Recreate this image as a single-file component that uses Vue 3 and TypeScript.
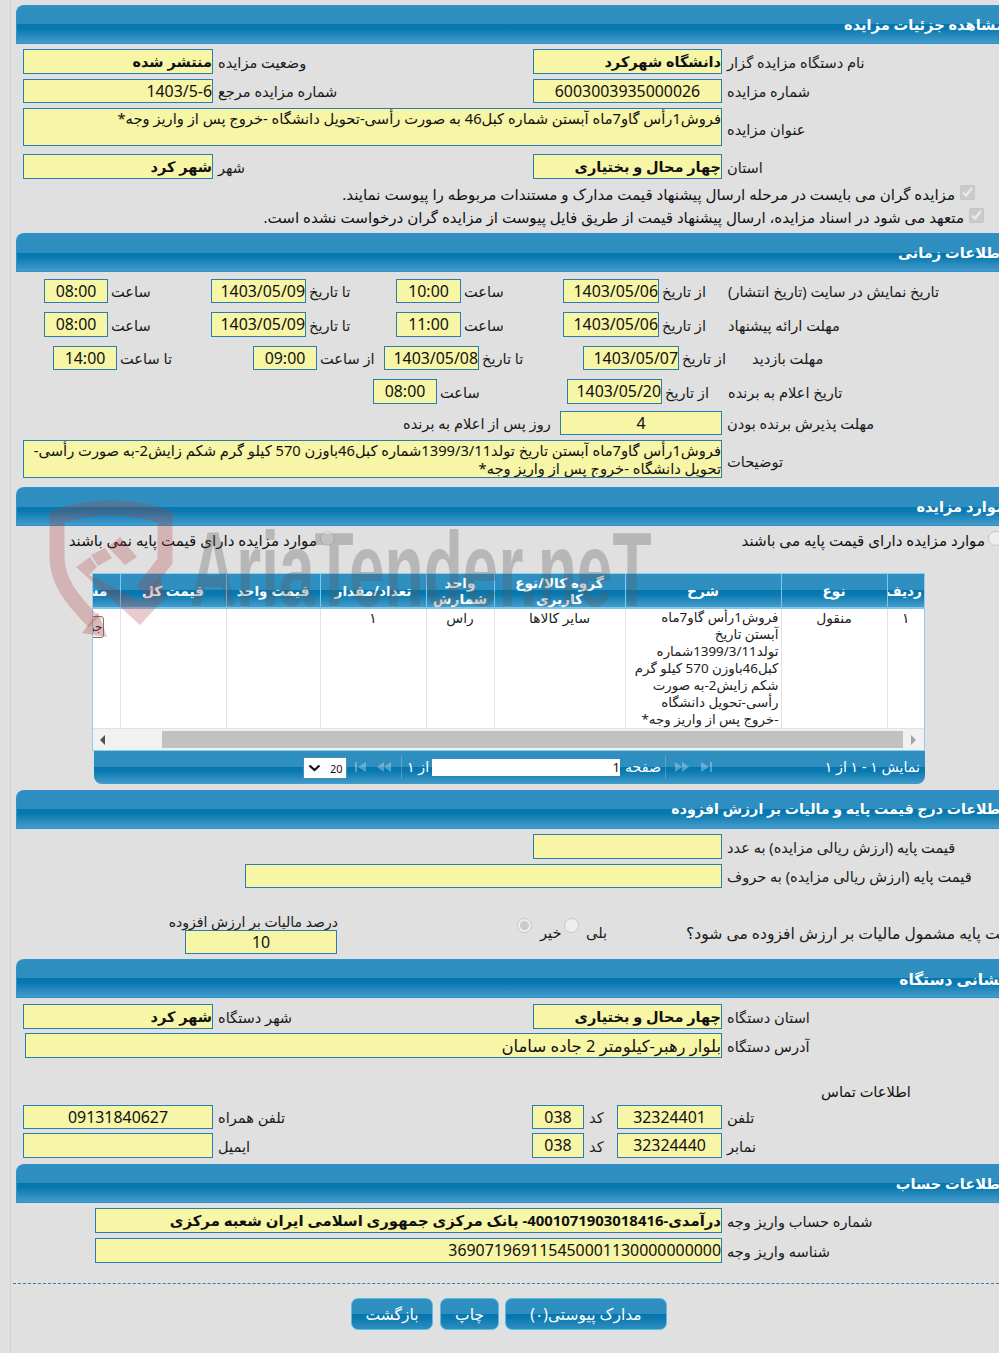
<script setup lang="ts">
const desc = 'فروش1رأس گاو7ماه آبستن تاریخ تولد1399/3/11شماره کبل46باوزن 570 کیلو گرم شکم زایش2-به صورت رأسی-تحویل دانشگاه -خروج پس از واریز وجه*'
const title = 'فروش1رأس گاو7ماه آبستن شماره کبل46 به صورت رأسی-تحویل دانشگاه -خروج پس از واریز وجه*'
</script>

<template>
  <div class="page">
    <div class="frame">
      <h2 class="head" dir="rtl">مشاهده جزئیات مزایده</h2>
      <div class="body b1">
        <div class="row r-two">
          <div class="fld strong" dir="rtl">منتشر شده</div><span class="lb" dir="rtl">وضعیت مزایده</span>
          <div class="fld strong" dir="rtl">دانشگاه شهرکرد</div><span class="lb" dir="rtl">نام دستگاه مزایده گزار</span>
        </div>
        <div class="row r-two g5 h24">
          <div class="fld" dir="rtl">1403/5-6</div><span class="lb" dir="rtl">شماره مزایده مرجع</span>
          <div class="fld center">6003003935000026</div><span class="lb" dir="rtl">شماره مزایده</span>
        </div>
        <div class="row r-wide g5 h38">
          <div class="fld area" dir="rtl">{{ title }}</div><span class="lb" dir="rtl">عنوان مزایده</span>
        </div>
        <div class="row r-two g8">
          <div class="fld strong" dir="rtl">شهر کرد</div><span class="lb" dir="rtl">شهر</span>
          <div class="fld strong" dir="rtl">چهار محال و بختیاری</div><span class="lb" dir="rtl">استان</span>
        </div>
        <div class="chk c1" dir="rtl"><input type="checkbox" checked disabled /><span>مزایده گران می بایست در مرحله ارسال پیشنهاد قیمت مدارک و مستندات مربوطه را پیوست نمایند.</span></div>
        <div class="chk c2" dir="rtl"><input type="checkbox" checked disabled /><span>متعهد می شود در اسناد مزایده، ارسال پیشنهاد قیمت از طریق فایل پیوست از مزایده گران درخواست نشده است.</span></div>
      </div>

      <h2 class="head" dir="rtl">اطلاعات زمانی</h2>
      <div class="body b2">
        <div class="row r-t1 h24">
          <div class="fld center">08:00</div><span class="lb" dir="rtl">ساعت</span>
          <div class="fld" dir="ltr">1403/05/09</div><span class="lb" dir="rtl">تا تاریخ</span>
          <div class="fld center">10:00</div><span class="lb" dir="rtl">ساعت</span>
          <div class="fld">1403/05/06</div><span class="lb" dir="rtl">از تاریخ</span>
          <span class="lb" dir="rtl">تاریخ نمایش در سایت (تاریخ انتشار)</span>
        </div>
        <div class="row r-t1 g9">
          <div class="fld center">08:00</div><span class="lb" dir="rtl">ساعت</span>
          <div class="fld">1403/05/09</div><span class="lb" dir="rtl">تا تاریخ</span>
          <div class="fld center">11:00</div><span class="lb" dir="rtl">ساعت</span>
          <div class="fld">1403/05/06</div><span class="lb" dir="rtl">از تاریخ</span>
          <span class="lb" dir="rtl">مهلت ارائه پیشنهاد</span>
        </div>
        <div class="row r-t2 g9 h24">
          <div class="fld center">14:00</div><span class="lb" dir="rtl">تا ساعت</span>
          <div class="fld center">09:00</div><span class="lb" dir="rtl">از ساعت</span>
          <div class="fld">1403/05/08</div><span class="lb" dir="rtl">تا تاریخ</span>
          <div class="fld">1403/05/07</div><span class="lb" dir="rtl">از تاریخ</span>
          <span class="lb" dir="rtl">مهلت بازدید</span>
        </div>
        <div class="row r-t3 g9">
          <div class="fld center">08:00</div><span class="lb" dir="rtl">ساعت</span>
          <div class="fld">1403/05/20</div><span class="lb" dir="rtl">از تاریخ</span>
          <span class="lb" dir="rtl">تاریخ اعلام به برنده</span>
        </div>
        <div class="row r-t4 g7 h24">
          <span class="lb" dir="rtl">روز پس از اعلام به برنده</span>
          <div class="fld center">4</div>
          <span class="lb" dir="rtl">مهلت پذیرش برنده بودن</span>
        </div>
        <div class="row r-wide g5 h38">
          <div class="fld area" dir="rtl">{{ desc }}</div><span class="lb" dir="rtl">توضیحات</span>
        </div>
      </div>

      <h2 class="head" dir="rtl">موارد مزایده</h2>
      <div class="body b3">
        <div class="radios">
          <label class="rad-l" dir="rtl"><input type="radio" disabled /><span>موارد مزایده دارای قیمت پایه نمی باشند</span></label>
          <label class="rad-r" dir="rtl"><input type="radio" disabled /><span>موارد مزایده دارای قیمت پایه می باشند</span></label>
        </div>
        <div class="grid">
          <table>
            <colgroup>
              <col class="c-a" /><col class="c-b" /><col class="c-c" /><col class="c-d" /><col class="c-e" />
              <col class="c-f" /><col class="c-g" /><col class="c-h" /><col class="c-i" />
            </colgroup>
            <thead>
              <tr>
                <th dir="rtl"><div class="clip">مشاهده</div></th>
                <th dir="rtl">قیمت کل</th>
                <th dir="rtl">قیمت واحد</th>
                <th dir="rtl">تعداد/مقدار</th>
                <th dir="rtl">واحد شمارش</th>
                <th dir="rtl">گروه کالا/نوع کاربری</th>
                <th dir="rtl">شرح</th>
                <th dir="rtl">نوع</th>
                <th dir="rtl">ردیف</th>
              </tr>
            </thead>
            <tbody>
              <tr>
                <td class="btn-cell" dir="rtl"><span class="mini">جزئیات</span></td>
                <td></td>
                <td></td>
                <td class="mid" dir="rtl">۱</td>
                <td class="mid" dir="rtl">راس</td>
                <td class="mid" dir="rtl">سایر کالاها</td>
                <td dir="rtl"><div class="txt">{{ desc }}</div></td>
                <td class="mid" dir="rtl">منقول</td>
                <td class="mid" dir="rtl">۱</td>
              </tr>
            </tbody>
          </table>
          <div class="scroll">
            <svg class="arr" width="8" height="10" viewBox="0 0 8 10"><path d="M6 0v10L1 5z" fill="#505050" /></svg>
            <div class="thumb"></div>
            <svg class="arr" width="8" height="10" viewBox="0 0 8 10"><path d="M2 0v10l5-5z" fill="#a3a3a3" /></svg>
          </div>
        </div>
        <div class="pager">
          <div class="sel"><svg width="13" height="8" viewBox="0 0 13 8"><path d="M1.5 1.5l5 4.5 5-4.5" fill="none" stroke="#111" stroke-width="2.2" /></svg><span>20</span></div>
          <svg class="pi p1" width="13" height="10" viewBox="0 0 13 10"><path d="M1 0h2v10H1zM12 0v10L4 5z" /></svg>
          <svg class="pi p2" width="16" height="10" viewBox="0 0 16 10"><path d="M8 0v10L1 5zM15 0v10L8 5z" /></svg>
          <i class="sep s1"></i>
          <span class="ptx p-of" dir="rtl">از ۱</span>
          <div class="pinp">1</div>
          <span class="ptx p-pg" dir="rtl">صفحه</span>
          <i class="sep s2"></i>
          <svg class="pi p3" width="16" height="10" viewBox="0 0 16 10"><path d="M1 0v10l7-5zM8 0v10l7-5z" /></svg>
          <svg class="pi p4" width="13" height="10" viewBox="0 0 13 10"><path d="M1 0v10l8-5zM10 0h2v10h-2z" /></svg>
          <span class="ptx p-info" dir="rtl">نمایش ۱ - ۱ از ۱</span>
        </div>
      </div>

      <h2 class="head h-long" dir="rtl">اطلاعات درج قیمت پایه و مالیات بر ارزش افزوده</h2>
      <div class="body b4">
        <div class="row r-p1"><div class="fld"></div><span class="lb" dir="rtl">قیمت پایه (ارزش ریالی مزایده) به عدد</span></div>
        <div class="row r-p2 g5 h24"><div class="fld"></div><span class="lb" dir="rtl">قیمت پایه (ارزش ریالی مزایده) به حروف</span></div>
        <div class="tax">
          <div class="tax-l">
            <span class="lb tight" dir="rtl">درصد مالیات بر ارزش افزوده</span>
            <div class="fld center">10</div>
          </div>
          <div class="tax-r" dir="ltr">
            <input class="tr1" type="radio" checked disabled />
            <span class="lb tr2" dir="rtl">خیر</span>
            <input class="tr3" type="radio" disabled />
            <span class="lb tr4" dir="rtl">بلی</span>
            <span class="lb tr5" dir="rtl">قیمت پایه مشمول مالیات بر ارزش افزوده می شود؟</span>
          </div>
        </div>
      </div>

      <h2 class="head h-addr" dir="rtl">نشانی دستگاه</h2>
      <div class="body b5">
        <div class="row r-two">
          <div class="fld strong" dir="rtl">شهر کرد</div><span class="lb" dir="rtl">شهر دستگاه</span>
          <div class="fld strong" dir="rtl">چهار محال و بختیاری</div><span class="lb" dir="rtl">استان دستگاه</span>
        </div>
        <div class="row r-addr g4">
          <div class="fld addr" dir="rtl">بلوار رهبر-کیلومتر 2 جاده سامان</div><span class="lb" dir="rtl">آدرس دستگاه</span>
        </div>
        <div class="contact" dir="rtl">اطلاعات تماس</div>
        <div class="row r-ph h24">
          <div class="fld center">09131840627</div><span class="lb" dir="rtl">تلفن همراه</span>
          <div class="fld center">038</div><span class="lb" dir="rtl">کد</span>
          <div class="fld center">32324401</div><span class="lb" dir="rtl">تلفن</span>
        </div>
        <div class="row r-ph g4">
          <div class="fld"></div><span class="lb" dir="rtl">ایمیل</span>
          <div class="fld center">038</div><span class="lb" dir="rtl">کد</span>
          <div class="fld center">32324440</div><span class="lb" dir="rtl">نمابر</span>
        </div>
      </div>

      <h2 class="head" dir="rtl">اطلاعات حساب</h2>
      <div class="body b6">
        <div class="row r-acc">
          <div class="fld strong acc" dir="rtl">درآمدی-4001071903018416- بانک مرکزی جمهوری اسلامی ایران شعبه مرکزی</div><span class="lb" dir="rtl">شماره حساب واریز وجه</span>
        </div>
        <div class="row r-acc g5">
          <div class="fld">369071969115450001130000000000</div><span class="lb" dir="rtl">شناسه واریز وجه</span>
        </div>
      </div>
      <div class="dash"></div>
      <div class="actions" dir="ltr">
        <button class="b-back" dir="rtl">بازگشت</button>
        <button class="b-print" dir="rtl">چاپ</button>
        <button class="b-docs" dir="rtl">مدارک پیوستی(۰)</button>
      </div>
    </div>

    <div class="mark" aria-hidden="true">
      <svg class="shield" width="130" height="150" viewBox="0 0 130 150">
        <path d="M50 127 C26 103 13 85 13 62 V22 Q66 4 121 22 V66 L98 96" fill="none" stroke="#b03a3a" stroke-opacity=".27" stroke-width="15" />
        <path d="M38 138 L63 142 L54 117z" fill="#b03a3a" fill-opacity=".3" />
        <path d="M32 72 L46 62 L53 72 L45 80 L96 106 L116 82 L122 102 L96 130z" fill="#b03a3a" fill-opacity=".27" />
        <path d="M47 60 L61 53 L68 63 L54 71z" fill="#b03a3a" fill-opacity=".27" />
        <path d="M64 52 L76 42 L93 62 L81 70z" fill="#b03a3a" fill-opacity=".27" />
      </svg>
      <span class="wm">AriaTender.neT</span>
    </div>
  </div>
</template>

<style>
html, body { margin: 0; background: #e0e0e0; }
</style>

<style scoped>
.page {
  position: relative;
  width: 999px;
  height: 1353px;
  overflow: hidden;
  background: #e0e0e0;
  font-family: "Noto Sans", "DejaVu Sans", sans-serif;
  color: #111;
}
.frame {
  width: 1100px;
  height: 1353px;
  box-sizing: border-box;
  margin-left: 10px;
  padding: 5px 0 0 5px;
  border-left: 1px solid #cfcfcf;
}
.head {
  box-sizing: border-box;
  margin: 0;
  width: 989px;
  height: 39px;
  padding: 8px 0 0;
  border: 1px solid #2c92d2;
  border-right: 0;
  border-radius: 8px 0 0 0;
  background: linear-gradient(#2f8fc0 0, #2e8ebf 50%, #0476ae 50%, #0a79b0 62%, #459ccb 100%);
  color: #fff;
  font-size: 14.6px;
  font-weight: 700;
  line-height: 20px;
  text-align: right;
  white-space: nowrap;
}
.h-long { font-size: 14.2px; }
.h-addr { font-size: 15.4px; padding-top: 10px; }
.body { box-sizing: border-box; }
.b1 { height: 189px; padding-top: 5px; }
.b2 { height: 215px; padding-top: 7px; }
.b3 { height: 264px; }
.b4 { height: 130px; padding-top: 5px; }
.b5 { height: 166px; padding-top: 6px; }
.b6 { height: 80px; padding-top: 5px; }
.row {
  display: grid;
  align-items: center;
  height: 25px;
  direction: ltr;
}
.g4 { margin-top: 4px; }
.g5 { margin-top: 5px; }
.g7 { margin-top: 7px; }
.g8 { margin-top: 8px; }
.g9 { margin-top: 9px; }
.h24 { height: 24px; }
.h38 { height: 38px; }
.r-two { padding-left: 7px; grid-template-columns: 190px 320px 189px auto; }
.r-wide { padding-left: 7px; grid-template-columns: 699px auto; }
.r-t1 { padding-left: 28px; grid-template-columns: 64px 103px 95px 90px 65px 102px 96px 69px auto; }
.r-t2 { padding-left: 37px; grid-template-columns: 64px 136px 64px 67px 95px 104px 96px 73px auto; }
.r-t3 { padding-left: 357px; grid-template-columns: 64px 130px 95px 66px auto; }
.r-t4 { padding-left: 387px; grid-template-columns: 157px 162px auto; }
.r-p1 { padding-left: 517px; grid-template-columns: 189px auto; }
.r-p2 { padding-left: 229px; grid-template-columns: 477px auto; }
.r-addr { padding-left: 9px; grid-template-columns: 697px auto; }
.r-ph { padding-left: 7px; grid-template-columns: 190px 319px 52px 33px 105px auto; }
.r-acc { padding-left: 79px; grid-template-columns: 627px auto; }
.lb {
  display: block;
  box-sizing: border-box;
  padding-left: 5px;
  font-size: 14.6px;
  line-height: 20px;
  text-align: left;
  white-space: nowrap;
  color: #1a1a1a;
}
.lb.tight { padding: 0; text-align: right; font-size: 14px; }
.r-t1 > .lb,
.r-t2 > .lb,
.r-t3 > .lb { padding-left: 3px; }
.r-t1 > .lb:last-child,
.r-t2 > .lb:last-child,
.r-t3 > .lb:last-child,
.r-t4 > .lb:first-child { padding-left: 0; }
.r-wide > .lb { padding-top: 4px; }
.fld {
  box-sizing: border-box;
  height: 100%;
  padding: 0;
  border: 1px solid #2a7db3;
  background: #f7f5a6;
  font-size: 15.9px;
  line-height: 22px;
  text-align: right;
  white-space: nowrap;
  overflow: hidden;
  color: #111;
}
.fld.center { text-align: center; }
.fld.strong { font-size: 14.5px; font-weight: 700; }
.fld.strong.acc { font-size: 14.9px; }
.fld.addr { font-size: 16.5px; line-height: 24px; }
.fld.area {
  font-size: 14.7px;
  line-height: 18px;
  white-space: normal;
}
.chk {
  display: flex;
  align-items: center;
  height: 20px;
  font-size: 15.1px;
  white-space: nowrap;
  direction: rtl;
}
.chk input { width: 15px; height: 15px; margin: -4px 0 0 5px; flex: none; }
.c1 { margin: 5px 8px 0 0; width: 959px; }
.c2 { margin: 3px 0 0 0; width: 968px; }
.radios { position: relative; height: 47px; }
.rad-l, .rad-r {
  position: absolute;
  top: 4px;
  display: flex;
  align-items: center;
  gap: 3px;
  font-size: 15.1px;
  white-space: nowrap;
  height: 20px;
}
.rad-l { left: 54px; width: 265px; }
.rad-r { left: 726px; width: 261px; }
.radios input { width: 15px; height: 15px; margin: -4px 0 0; flex: none; }
.grid {
  box-sizing: border-box;
  width: 833px;
  height: 178px;
  margin-left: 76px;
  border: 1px solid #90cdec;
  background: #fff;
  overflow: hidden;
}
table {
  table-layout: fixed;
  border-collapse: collapse;
  width: 831px;
}
.c-a { width: 27px; }
.c-b { width: 106px; }
.c-c { width: 94px; }
.c-d { width: 106px; }
.c-e { width: 68px; }
.c-f { width: 131px; }
.c-g { width: 156px; }
.c-h { width: 106px; }
.c-i { width: 37px; }
th {
  height: 34px;
  padding: 0 2px;
  box-sizing: border-box;
  border-left: 1px solid #7ec8ec;
  border-bottom: 2px solid #7ec8ec;
  background: linear-gradient(#2f8fc0 0, #2e8ebf 50%, #0476ae 50%, #0a79b0 62%, #459ccb 100%);
  color: #fff;
  font-size: 13.7px;
  font-weight: 700;
  line-height: 16px;
  text-align: center;
  overflow: hidden;
}
th:first-child { border-left: 0; }
.clip { white-space: nowrap; text-align: right; padding-right: 10px; }
td {
  height: 119px;
  padding: 0;
  border-left: 1px solid #e2e2e2;
  border-bottom: 1px solid #e2e2e2;
  vertical-align: top;
  font-size: 13.8px;
  line-height: 17px;
  color: #222;
  overflow: hidden;
}
td:first-child { border-left: 0; }
.mid { text-align: center; }
.txt {
  box-sizing: border-box;
  height: 119px;
  overflow: hidden;
  padding: 0 2px 0 6px;
  text-align: right;
  font-size: 13.4px;
}
.btn-cell { position: relative; }
.mini {
  position: absolute;
  top: 7px;
  right: 16px;
  box-sizing: border-box;
  height: 22px;
  width: 60px;
  border: 1px solid #777;
  border-radius: 3px;
  background: #efefef;
  line-height: 20px;
  white-space: nowrap;
  text-align: right;
  font-size: 12px;
}
.scroll {
  display: flex;
  align-items: center;
  height: 21px;
  background: #f1f1f1;
}
.arr { flex: none; margin-left: 6px; }
.thumb { width: 741px; height: 17px; margin-left: 55px; background: #c1c1c1; }
.pager {
  position: relative;
  width: 831px;
  height: 33px;
  margin-left: 78px;
  border-radius: 0 0 8px 8px;
  background: linear-gradient(#2f8fc0 0, #2e8ebf 50%, #0476ae 50%, #0a79b0 62%, #459ccb 100%);
  color: #fff;
}
.sel {
  position: absolute;
  left: 209px;
  top: 6px;
  box-sizing: border-box;
  width: 44px;
  height: 22px;
  display: flex;
  align-items: center;
  gap: 9px;
  padding-left: 4px;
  background: #fff;
  border: 1px solid #4b8db3;
  color: #111;
  font-size: 11px;
}
.pi { position: absolute; top: 11px; fill: rgba(255, 255, 255, .3); }
.p1 { left: 260px; }
.p2 { left: 282px; }
.p3 { left: 580px; }
.p4 { left: 606px; }
.sep { position: absolute; top: 5px; width: 1px; height: 23px; background: rgba(255, 255, 255, .22); }
.s1 { left: 307px; }
.s2 { left: 571px; }
.ptx { position: absolute; top: 6px; font-size: 14.2px; line-height: 20px; white-space: nowrap; }
.p-of { left: 313px; }
.pinp {
  position: absolute;
  left: 338px;
  top: 8px;
  width: 188px;
  height: 17px;
  background: #fff;
  color: #111;
  text-align: right;
  font-size: 13px;
  line-height: 17px;
}
.p-pg { left: 531px; }
.p-info { right: 5px; }
.tax { position: relative; height: 70px; }
.tax-l { position: absolute; left: 153px; top: 24px; width: 169px; }
.tax-l .lb { height: 20px; margin-bottom: -2px; }
.tax-l .fld { width: 152px; height: 24px; margin-left: 16px; }
.tax-r { position: absolute; top: 30px; left: 501px; width: 490px; height: 20px; }
.tax-r input { position: absolute; top: 0; width: 15px; height: 15px; margin: 0; }
.tax-r .lb { position: absolute; top: 4px; padding: 0; }
.tr1 { left: 0; }
.tr2 { left: 23px; }
.tr3 { left: 47px; }
.tr4 { left: 69px; }
.tax-r .tr5 { left: 169px; top: 5px; font-size: 15.6px; }
.contact {
  width: 100px;
  height: 20px;
  margin: 23px 0 4px 800px;
  font-size: 14.6px;
  line-height: 20px;
  text-align: center;
  white-space: nowrap;
}
.dash {
  width: 986px;
  margin-left: -3px;
  border-top: 1px dashed #46799a;
}
.actions {
  display: flex;
  margin: 14px 0 0 335px;
}
button {
  box-sizing: border-box;
  height: 32px;
  padding: 0;
  border: 1px solid #58bde6;
  border-radius: 7px;
  background: linear-gradient(#2f8fc0 0, #2e8ebf 50%, #0476ae 50%, #0a79b0 62%, #2f8dbf 100%);
  color: #fff;
  font-family: inherit;
  font-size: 15.5px;
}
.b-back { width: 82px; margin-right: 7px; }
.b-print { width: 59px; margin-right: 6px; }
.b-docs { width: 162px; }
.mark {
  position: absolute;
  left: 44px;
  top: 495px;
  width: 620px;
  height: 150px;
  pointer-events: none;
}
.shield { position: absolute; left: 0; top: 0; }
.wm {
  position: absolute;
  left: 146px;
  top: 10px;
  font-family: "Liberation Sans", sans-serif;
  font-size: 105px;
  font-weight: 700;
  line-height: 130px;
  white-space: nowrap;
  color: rgba(90, 90, 90, .3);
  transform-origin: 0 50%;
  transform: scaleX(.61);
}
</style>
